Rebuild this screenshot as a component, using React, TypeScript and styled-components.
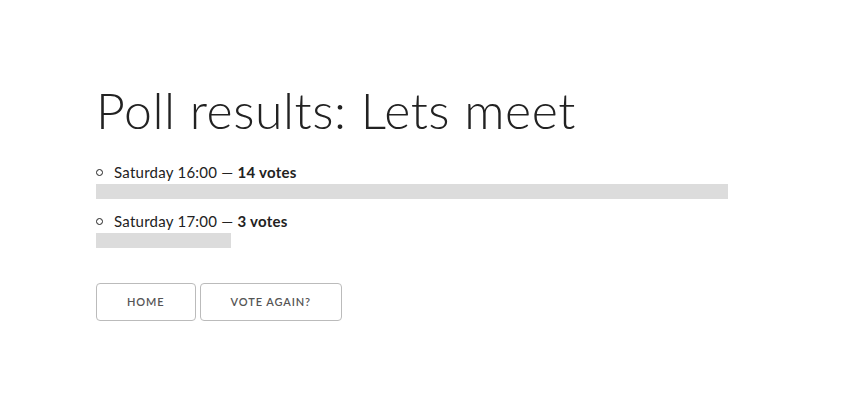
import * as React from "react"
import styled, { createGlobalStyle } from "styled-components"

const GlobalStyle = createGlobalStyle`
    html, body {
        margin: 0;
        padding: 0;
        background: #fff;
    }
    body {
        font-family: Lato, "Open Sans", sans-serif;
        font-size: 15px;
        line-height: 1.6;
        color: #222;
    }
`

const Page = styled.main`
    padding: 80px 0 0 96px;
`

const Title = styled.h1`
    margin: 0 0 20px;
    font-size: 50px;
    font-weight: 300;
    line-height: 60px;
    letter-spacing: 0.55px;
`

const ResultList = styled.ul`
    margin: 0 0 35px;
    padding: 0;
    list-style: none;
    width: 632px;
`

const ResultItem = styled.li`
    margin-bottom: 10px;
    letter-spacing: 0.25px;

    & > b {
        font-weight: 700;
    }
`

const Label = styled.div`
    display: flex;
    align-items: center;

    &::before {
        content: "";
        width: 5px;
        height: 5px;
        border: 1px solid #222;
        border-radius: 50%;
        margin: 1px 11px 0 0;
    }
`

const BarTrack = styled.div`
    height: 15px;
`

const Bar = styled.div`
    height: 100%;
    background: #dcdcdc;
`

const Actions = styled.div`
    display: flex;
    gap: 4px;
`

const Button = styled.a`
    display: inline-flex;
    align-items: center;
    height: 38px;
    padding: 0 30px;
    box-sizing: border-box;
    border: 1px solid #bbb;
    border-radius: 4px;
    color: #555;
    font-size: 11px;
    font-weight: 600;
    letter-spacing: 0.9px;
    text-transform: uppercase;
    text-decoration: none;
    background: transparent;
`

const results = [
    { label: "Saturday 16:00", votes: 14 },
    { label: "Saturday 17:00", votes: 3 },
]

export default function App() {
    const max = Math.max(...results.map(r => r.votes))

    return (
        <Page>
            <GlobalStyle />
            <Title>Poll results: Lets meet</Title>
            <ResultList>
                {results.map(r => (
                    <ResultItem key={r.label}>
                        <Label>
                            <span>{r.label} — <b>{r.votes} votes</b></span>
                        </Label>
                        <BarTrack>
                            <Bar style={{ width: `${(r.votes / max) * 100}%` }} />
                        </BarTrack>
                    </ResultItem>
                ))}
            </ResultList>
            <Actions>
                <Button href="#">Home</Button>
                <Button href="#">Vote again?</Button>
            </Actions>
        </Page>
    )
}
